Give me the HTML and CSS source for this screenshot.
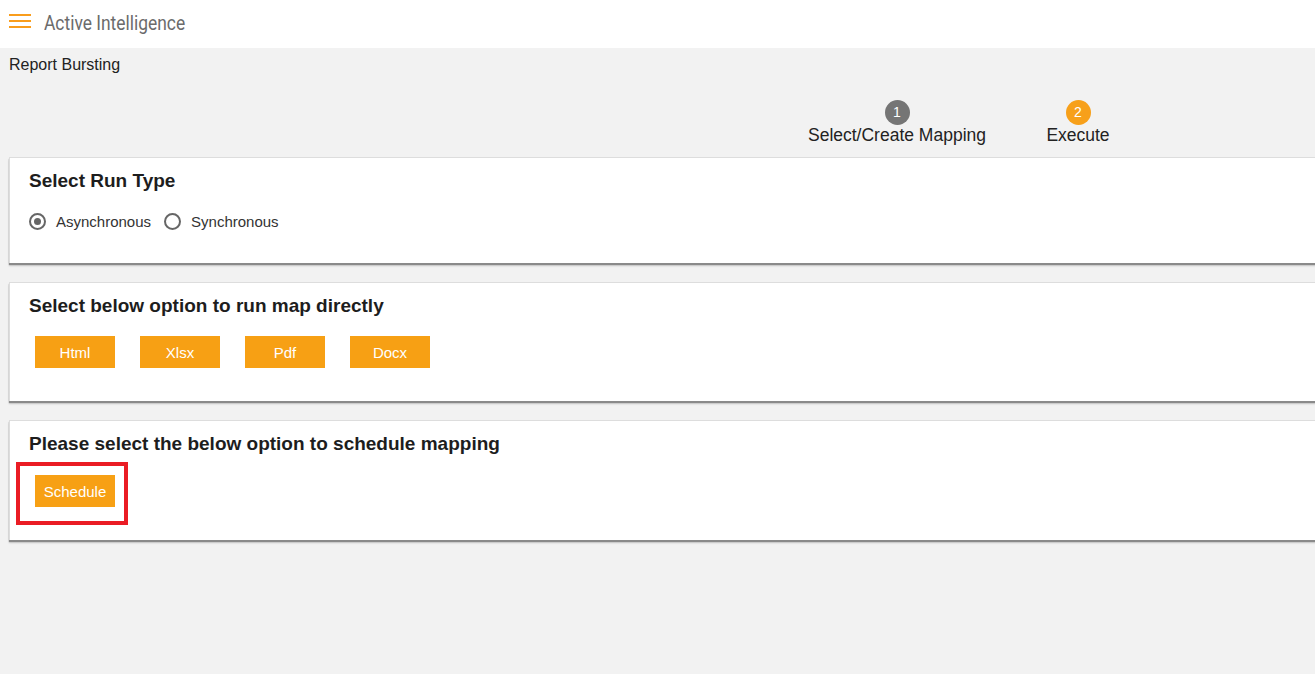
FILE: index.html
```html
<!DOCTYPE html>
<html lang="en">
<head>
    <meta charset="UTF-8">
    <meta name="viewport" content="width=device-width, initial-scale=1.0">
    <title>Report Bursting</title>
    <link rel="stylesheet" href="styles.css">
</head>
<body>
    <div class="topbar">
        <div class="menu-icon">
            <span></span>
            <span></span>
            <span></span>
        </div>
        <div class="brand">Active Intelligence</div>
    </div>

    <div class="page">
        <div class="page-title">Report Bursting</div>

        <div class="stepper">
            <div class="step step-one">
                <div class="step-num">1</div>
                <div class="step-label">Select/Create Mapping</div>
            </div>
            <div class="step step-two active">
                <div class="step-num">2</div>
                <div class="step-label">Execute</div>
            </div>
        </div>

        <div class="card card-run">
            <h3>Select Run Type</h3>
            <div class="radio-row">
                <label class="radio checked"><span class="dot"></span>Asynchronous</label>
                <label class="radio"><span class="dot"></span>Synchronous</label>
            </div>
        </div>

        <div class="card card-direct">
            <h3>Select below option to run map directly</h3>
            <div class="btn-row">
                <button class="btn">Html</button>
                <button class="btn">Xlsx</button>
                <button class="btn">Pdf</button>
                <button class="btn">Docx</button>
            </div>
        </div>

        <div class="card card-schedule">
            <h3>Please select the below option to schedule mapping</h3>
            <div class="btn-row">
                <div class="highlight-wrap">
                    <button class="btn">Schedule</button>
                    <div class="highlight"></div>
                </div>
            </div>
        </div>
    </div>
</body>
</html>
```

FILE: styles.css
```css
* {
    margin: 0;
    padding: 0;
    box-sizing: border-box;
}

html, body {
    width: 100%;
    height: 100%;
    overflow: hidden;
    background: #f2f2f2;
    font-family: "Liberation Sans", Arial, sans-serif;
    color: #222;
}

.topbar {
    height: 48px;
    background: #ffffff;
    display: flex;
    align-items: center;
    padding-left: 9px;
}

.menu-icon {
    width: 22px;
    display: flex;
    flex-direction: column;
    gap: 4px;
    margin-top: -6px;
}

.menu-icon span {
    display: block;
    height: 2px;
    background: #f99d1c;
}

.brand {
    margin-left: 13px;
    font-family: "Roboto", sans-serif;
    font-size: 20px;
    color: #6b6b6b;
    transform: scaleX(0.87);
    transform-origin: left center;
    margin-top: -2px;
}

.page {
    padding-left: 9px;
}

.page-title {
    padding-top: 8px;
    font-size: 16px;
    line-height: 18px;
    color: #222;
}

.stepper {
    display: flex;
    justify-content: flex-end;
    padding-right: 187px;
    margin-top: 26px;
    height: 57px;
}

.step {
    display: flex;
    flex-direction: column;
    align-items: center;
}

.step-one {
    width: 200px;
}

.step-two {
    width: 100px;
    margin-left: 31px;
}

.step-num {
    width: 25px;
    height: 25px;
    border-radius: 50%;
    background: #757575;
    color: #fff;
    font-size: 14px;
    line-height: 25px;
    text-align: center;
}

.step.active .step-num {
    background: #f7a01a;
}

.step-label {
    font-size: 17.5px;
    line-height: 20px;
    color: #222;
}

.card {
    background: #ffffff;
    border: 1px solid #dddddd;
    border-bottom: none;
    margin-right: -20px;
    padding: 12px 19px 0;
    box-shadow: 0 2px 1px #8a8a8a, 0 3px 2px rgba(0, 0, 0, 0.15);
    margin-bottom: 19px;
}

.card h3 {
    font-size: 19px;
    line-height: 22px;
    font-weight: bold;
    color: #1d1d1d;
}

.card-run {
    height: 106px;
}

.card-direct {
    height: 119px;
}

.card-schedule {
    height: 120px;
}

.radio-row {
    display: flex;
    align-items: center;
    margin-top: 21px;
    gap: 13px;
}

.radio {
    display: flex;
    align-items: center;
    font-size: 15px;
    color: #333;
}

.radio .dot {
    width: 17px;
    height: 17px;
    border: 2px solid #666;
    border-radius: 50%;
    margin-right: 10px;
    display: flex;
    align-items: center;
    justify-content: center;
}

.radio.checked .dot::after {
    content: "";
    width: 7px;
    height: 7px;
    border-radius: 50%;
    background: #666;
}

.btn-row {
    display: flex;
    gap: 25px;
    padding-left: 6px;
    margin-top: 19px;
}

.card-schedule .btn-row {
    margin-top: 20px;
}

.btn {
    width: 80px;
    height: 32px;
    border: none;
    background: #f7a014;
    color: #ffffff;
    font-family: "Liberation Sans", Arial, sans-serif;
    font-size: 15px;
}

.highlight-wrap {
    position: relative;
}

.highlight {
    position: absolute;
    left: -19px;
    top: -13px;
    width: 112px;
    height: 63px;
    border: 4px solid #ea1c24;
}
```
